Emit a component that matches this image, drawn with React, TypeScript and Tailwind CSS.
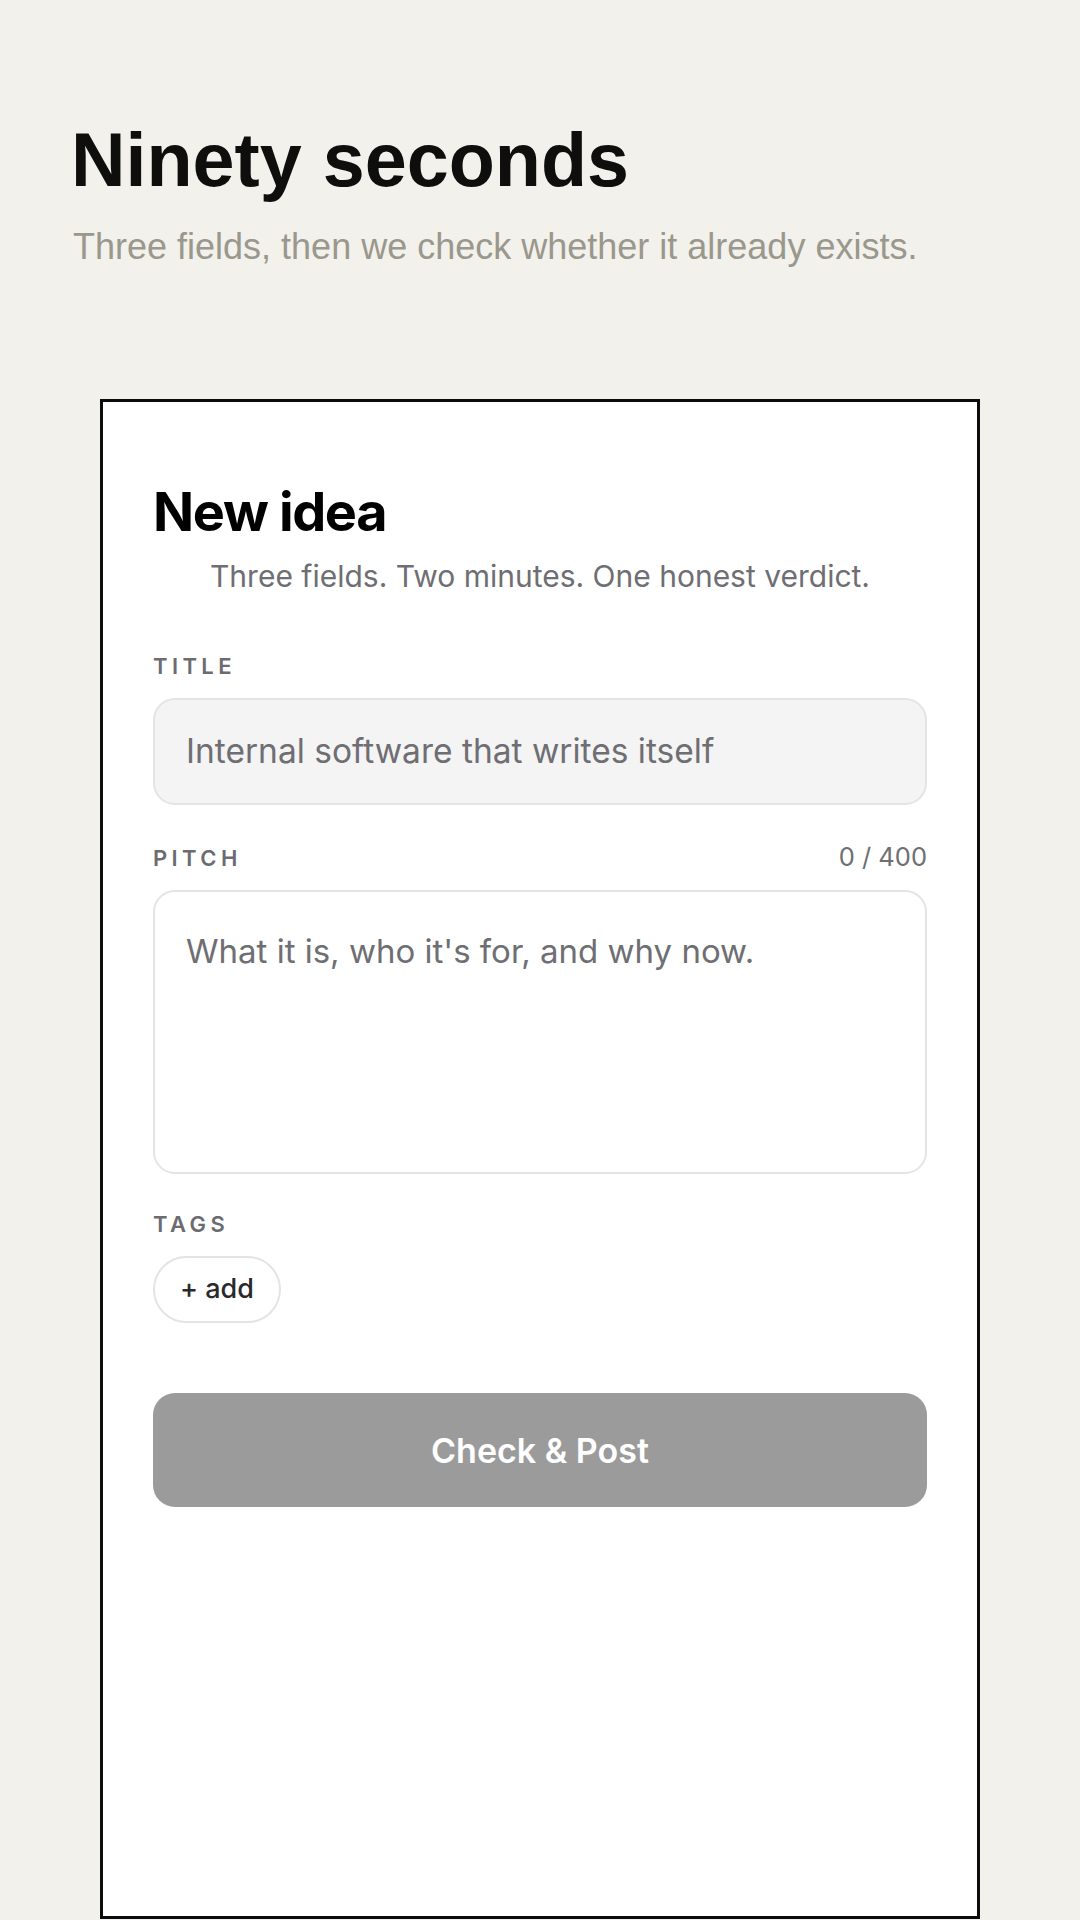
import { useState } from "react";

const MAX_PITCH = 400;

export default function App() {
  const [title, setTitle] = useState("");
  const [pitch, setPitch] = useState("");

  const canPost = title.trim().length > 0 && pitch.trim().length > 0;

  return (
    <div className="min-h-screen bg-[#f2f1ec]">
      {/* Page header */}
      <div className="pl-[71px] pt-[123px]">
        <h1 className="font-['Liberation_Sans',Arial,sans-serif] text-[75.5px] font-bold leading-none text-[#0e0e0c]">
          Ninety seconds
        </h1>
        <p className="mt-[30px] ml-[2px] font-['Liberation_Sans',Arial,sans-serif] text-[36px] leading-none text-[#9a978d]">
          Three fields, then we check whether it already exists.
        </p>
      </div>

      {/* Card */}
      <div className="mx-[100px] mt-[134px] h-[1520px] border-[3px] border-[#0c0c0c] bg-white px-[50px] pt-[83px] font-['Inter',sans-serif]">
        <h2 className="text-[54px] font-bold leading-none tracking-[-0.025em] text-black">New idea</h2>
        <p className="mt-[22px] text-center text-[30px] leading-none text-[#6e6e73]">
          Three fields. Two minutes. One honest verdict.
        </p>

        {/* Title */}
        <label className="mt-[64px] block text-[22px] font-semibold leading-none tracking-[0.2em] text-[#6b6b70]">
          TITLE
        </label>
        <input
          value={title}
          onChange={(e) => setTitle(e.target.value)}
          placeholder="Internal software that writes itself"
          className="mt-[21px] block h-[107px] w-full rounded-[22px] border-2 border-[#e4e4e4] bg-[#f4f4f4] px-[31px] text-[33.5px] text-[#1c1c1e] outline-none placeholder:text-[#6e6e73]"
        />

        {/* Pitch */}
        <div className="mt-[39px] flex items-baseline justify-between">
          <span className="text-[22px] font-semibold leading-none tracking-[0.2em] text-[#6b6b70]">PITCH</span>
          <span className="text-[25.5px] leading-none text-[#6e6e73]">
            {pitch.length} / {MAX_PITCH}
          </span>
        </div>
        <textarea
          value={pitch}
          maxLength={MAX_PITCH}
          onChange={(e) => setPitch(e.target.value)}
          placeholder="What it is, who it's for, and why now."
          className="mt-[21px] block h-[284px] w-full resize-none rounded-[22px] border-2 border-[#e4e4e4] bg-white px-[31px] pt-[35px] text-[33px] leading-[1.5] text-[#1c1c1e] outline-none placeholder:text-[#6e6e73]"
        />

        {/* Tags */}
        <div className="mt-[39px] text-[22px] font-semibold leading-none tracking-[0.2em] text-[#6b6b70]">TAGS</div>
        <div className="mt-[21px] flex gap-3">
          <button className="h-[67px] rounded-full border-2 border-[#e4e4e4] bg-white px-[25px] text-[27px] font-medium text-[#2a2a2c]">
            + add
          </button>
        </div>

        <button
          disabled={!canPost}
          className="mt-[70px] flex h-[114px] w-full items-center justify-center rounded-[22px] bg-[#9b9b9b] text-[34px] font-semibold text-white"
        >
          Check &amp; Post
        </button>
      </div>
    </div>
  );
}
